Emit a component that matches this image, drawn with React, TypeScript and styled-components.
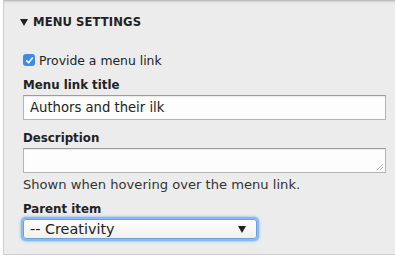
import React from "react";
import styled, { createGlobalStyle } from "styled-components";

const Global = createGlobalStyle`
  html, body { margin: 0; padding: 0; background: #ffffff; }
  body { font-family: "DejaVu Sans", "Noto Sans", sans-serif; color: #222; }
`;

const Page = styled.div`
  width: 395px;
  height: 260px;
  background: #fff;
  overflow: hidden;
`;

const Panel = styled.section`
  margin-left: 3px;
  width: 392px;
  height: 255px;
  box-sizing: border-box;
  background: #ececec;
  border-left: 1px solid #cfcfcf;
  border-bottom: 1px solid #cfcfcf;
  border-top: 1px solid #bdbdbd;
  box-shadow: inset 0 2px 2px -1px rgba(0, 0, 0, 0.12);
  padding: 13px 0 0 16px;
`;

const Summary = styled.div`
  display: flex;
  align-items: center;
  gap: 5px;
  font-size: 11.6px;
  font-weight: bold;
  letter-spacing: 0.1px;
  color: #222;
  text-transform: uppercase;
  height: 16px;
`;

const Arrow = styled.span`
  width: 0;
  height: 0;
  border-left: 4px solid transparent;
  border-right: 4px solid transparent;
  border-top: 7px solid #222;
`;

const Body = styled.div`
  display: flex;
  flex-direction: column;
  padding: 22px 0 0 3px;
`;

const CheckRow = styled.label`
  display: flex;
  align-items: center;
  gap: 4px;
  font-size: 12.4px;
  color: #222;
  height: 16px;
`;

const Check = styled.span`
  width: 12px;
  height: 12px;
  border-radius: 3px;
  background: #3b8beb;
  display: flex;
  align-items: center;
  justify-content: center;
`;

const Label = styled.div<{ $top: number }>`
  font-size: 11.8px;
  font-weight: bold;
  color: #222;
  margin-top: ${(p) => p.$top}px;
  height: 16px;
  line-height: 16px;
`;

const TextBox = styled.div`
  margin-top: 2px;
  width: 363px;
  height: 25px;
  box-sizing: border-box;
  background: #fdfdfd;
  border: 1px solid #b4b4b4;
  border-top-color: #9c9c9c;
  box-shadow: inset 0 1px 1px rgba(0, 0, 0, 0.08);
  font-size: 13.2px;
  color: #222;
  padding: 0 6px;
  display: flex;
  align-items: center;
  position: relative;
`;

const Grip = styled.svg`
  position: absolute;
  right: 1px;
  bottom: 1px;
`;

const Hint = styled.div`
  font-size: 13.1px;
  color: #333;
  margin-top: 4px;
  height: 15px;
  line-height: 15px;
  white-space: nowrap;
`;

const Select = styled.div`
  margin-top: 2px;
  width: 234px;
  height: 20px;
  box-sizing: border-box;
  border: 1px solid #6f9fdc;
  border-radius: 3px;
  box-shadow: 0 0 0 2px #86baf4, 0 0 2px 3px rgba(120, 175, 240, 0.5);
  background: linear-gradient(#fefefe, #f0f0ec);
  display: flex;
  align-items: center;
  justify-content: space-between;
  padding: 0 10px 0 6px;
  font-size: 14.4px;
  color: #222;
`;

const SelArrow = styled.span`
  width: 0;
  height: 0;
  border-left: 4.5px solid transparent;
  border-right: 4.5px solid transparent;
  border-top: 7px solid #222;
`;

export default function App() {
  return (
    <Page>
      <Global />
      <Panel>
        <Summary>
          <Arrow />
          Menu settings
        </Summary>
        <Body>
          <CheckRow>
            <Check>
              <svg width="9" height="9" viewBox="0 0 9 9">
                <path d="M1.6 4.8 L3.6 6.8 L7.4 2" stroke="#fff" strokeWidth="1.6" fill="none" strokeLinecap="round" strokeLinejoin="round" />
              </svg>
            </Check>
            Provide a menu link
          </CheckRow>
          <Label $top={9}>Menu link title</Label>
          <TextBox>Authors and their ilk</TextBox>
          <Label $top={10}>Description</Label>
          <TextBox>
            <Grip width="8" height="8" viewBox="0 0 8 8">
              <path d="M1 7 L7 1 M4 7 L7 4" stroke="#777" strokeWidth="0.8" strokeDasharray="1 0.6" />
            </Grip>
          </TextBox>
          <Hint>Shown when hovering over the menu link.</Hint>
          <Label $top={9}>Parent item</Label>
          <Select>
            -- Creativity
            <SelArrow />
          </Select>
        </Body>
      </Panel>
    </Page>
  );
}
